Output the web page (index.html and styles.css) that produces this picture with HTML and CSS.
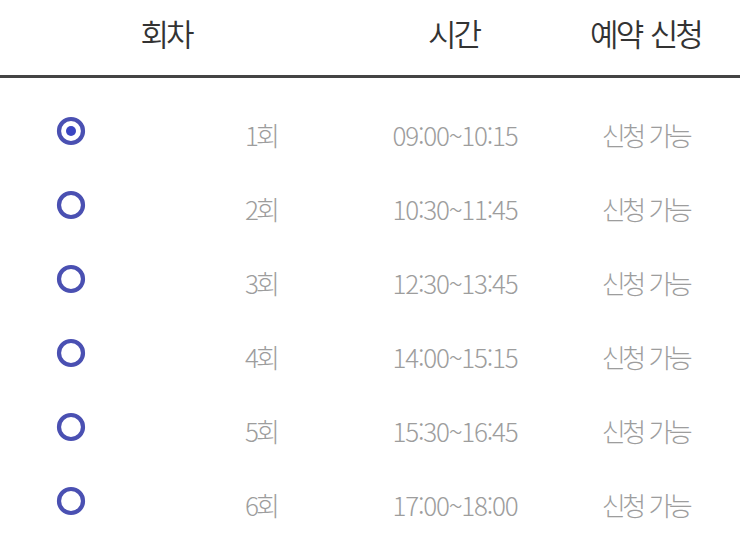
FILE: index.html
```html
<!DOCTYPE html>
<html lang="ko">
<head>
<meta charset="utf-8">
<link rel="stylesheet" href="styles.css">
</head>
<body>
<div class="table">
  <div class="head">
    <div class="hcell">회차</div>
    <div class="hcell">시간</div>
    <div class="hcell">예약 신청</div>
  </div>
  <div class="body">
    <div class="row">
      <div class="cell"><svg class="radio" viewBox="0 0 30 30"><circle cx="15" cy="15" r="12" class="ring"/><circle cx="15" cy="15" r="5" class="dot"/></svg></div>
      <div class="cell num">1회</div>
      <div class="cell time">09:00~10:15</div>
      <div class="cell status">신청 가능</div>
    </div>
    <div class="row">
      <div class="cell"><svg class="radio" viewBox="0 0 30 30"><circle cx="15" cy="15" r="12" class="ring"/></svg></div>
      <div class="cell num">2회</div>
      <div class="cell time">10:30~11:45</div>
      <div class="cell status">신청 가능</div>
    </div>
    <div class="row">
      <div class="cell"><svg class="radio" viewBox="0 0 30 30"><circle cx="15" cy="15" r="12" class="ring"/></svg></div>
      <div class="cell num">3회</div>
      <div class="cell time">12:30~13:45</div>
      <div class="cell status">신청 가능</div>
    </div>
    <div class="row">
      <div class="cell"><svg class="radio" viewBox="0 0 30 30"><circle cx="15" cy="15" r="12" class="ring"/></svg></div>
      <div class="cell num">4회</div>
      <div class="cell time">14:00~15:15</div>
      <div class="cell status">신청 가능</div>
    </div>
    <div class="row">
      <div class="cell"><svg class="radio" viewBox="0 0 30 30"><circle cx="15" cy="15" r="12" class="ring"/></svg></div>
      <div class="cell num">5회</div>
      <div class="cell time">15:30~16:45</div>
      <div class="cell status">신청 가능</div>
    </div>
    <div class="row">
      <div class="cell"><svg class="radio" viewBox="0 0 30 30"><circle cx="15" cy="15" r="12" class="ring"/></svg></div>
      <div class="cell num">6회</div>
      <div class="cell time">17:00~18:00</div>
      <div class="cell status">신청 가능</div>
    </div>
  </div>
</div>
</body>
</html>
```
FILE: styles.css
```css
html, body {
  margin: 0;
  padding: 0;
  background: #fff;
}
body {
  font-family: "Noto Sans CJK KR", "Noto Sans", sans-serif;
  width: 740px;
  height: 555px;
  overflow: hidden;
}
.head {
  display: grid;
  grid-template-columns: 332px 243px 141px;
  height: 65px;
  padding-bottom: 10px;
  border-bottom: 3px solid #444;
  align-items: center;
}
.hcell {
  text-align: center;
  font-size: 31px;
  letter-spacing: -3px;
  word-spacing: 3px;
  color: #333;
  font-weight: 350;
  line-height: 1;
}
.body {
  padding-top: 16px;
}
.row {
  display: grid;
  grid-template-columns: 141px 240px 148px 1fr;
  height: 74px;
  align-items: center;
}
.cell {
  text-align: center;
  font-size: 26px;
  letter-spacing: -3px;
  color: #9d9d9d;
  font-weight: 300;
  line-height: 1;
  padding-top: 8px;
}
.cell:first-child {
  padding-top: 0;
  display: flex;
  justify-content: center;
}
.cell.time {
  letter-spacing: -1.2px;
}
.cell.status {
  padding-left: 22px;
  letter-spacing: -3.5px;
  word-spacing: 2px;
}
.radio {
  width: 30px;
  height: 30px;
  display: block;
}
.ring {
  fill: none;
  stroke: #4a50b2;
  stroke-width: 4.2;
}
.dot {
  fill: #3b46c2;
}
```
